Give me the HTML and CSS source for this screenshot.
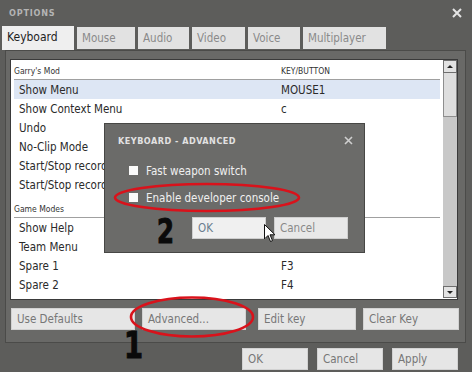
FILE: index.html
```html
<!DOCTYPE html>
<html lang="en">
<head>
  <meta charset="UTF-8">
  <title>Options</title>
  <link rel="stylesheet" href="styles.css">
</head>
<body>
  <div class="titlebar">
    <span class="title">OPTIONS</span>
    <svg class="close" width="10" height="10" viewBox="0 0 10 10"><path d="M1 1 L9 9 M9 1 L1 9" stroke="#e4e4e4" stroke-width="2"/></svg>
  </div>

  <div class="tabs">
    <div class="tab active w-keyboard">Keyboard</div>
    <div class="tab w-mouse">Mouse</div>
    <div class="tab w-audio">Audio</div>
    <div class="tab w-video">Video</div>
    <div class="tab w-voice">Voice</div>
    <div class="tab w-multi">Multiplayer</div>
  </div>

  <div class="panel">
    <div class="list">
      <div class="rows">
        <div class="group first"><span class="name">Garry's Mod</span><span class="key">KEY/BUTTON</span></div>
        <div class="row selected"><span class="name">Show Menu</span><span class="key">MOUSE1</span></div>
        <div class="row"><span class="name">Show Context Menu</span><span class="key">c</span></div>
        <div class="row"><span class="name">Undo</span><span class="key"></span></div>
        <div class="row"><span class="name">No-Clip Mode</span><span class="key"></span></div>
        <div class="row"><span class="name">Start/Stop recording</span><span class="key"></span></div>
        <div class="row"><span class="name">Start/Stop recording</span><span class="key"></span></div>
        <div class="group"><span class="name">Game Modes</span><span class="key"></span></div>
        <div class="row"><span class="name">Show Help</span><span class="key"></span></div>
        <div class="row"><span class="name">Team Menu</span><span class="key"></span></div>
        <div class="row"><span class="name">Spare 1</span><span class="key">F3</span></div>
        <div class="row"><span class="name">Spare 2</span><span class="key">F4</span></div>
      </div>
      <div class="scrollbar">
        <div class="sb-btn"><span class="arrow up"></span></div>
        <div class="sb-thumb"></div>
        <div class="sb-track"></div>
        <div class="sb-btn down"><span class="arrow dn"></span></div>
      </div>
    </div>
    <div class="actions">
      <button class="btn w-defaults">Use Defaults</button>
      <button class="btn w-advanced">Advanced...</button>
      <button class="btn w-edit">Edit key</button>
      <button class="btn w-clear">Clear Key</button>
    </div>
  </div>

  <div class="footer">
    <button class="btn w-small">OK</button>
    <button class="btn w-small">Cancel</button>
    <button class="btn w-small">Apply</button>
  </div>

  <!-- advanced dialog over the list -->
  <div class="dialog">
    <div class="dlg-title">
      <span>KEYBOARD - ADVANCED</span>
      <svg width="9" height="9" viewBox="0 0 9 9"><path d="M1 1 L8 8 M8 1 L1 8" stroke="#cfcfcf" stroke-width="1.6"/></svg>
    </div>
    <label class="check"><span class="box"></span>Fast weapon switch</label>
    <label class="check"><span class="box"></span>Enable developer console</label>
    <div class="dlg-actions">
      <button class="btn dlg-btn ok">OK</button>
      <button class="btn dlg-btn">Cancel</button>
    </div>
  </div>

  <svg class="marks" width="472" height="372" viewBox="0 0 472 372">
    <ellipse cx="207" cy="197.5" rx="92" ry="13.5" fill="none" stroke="#d9121b" stroke-width="2.6"/>
    <ellipse cx="192" cy="317" rx="61" ry="19.5" fill="none" stroke="#d9121b" stroke-width="2.6"/>
  </svg>

  <span class="num num-2">2</span>
  <span class="num num-1">1</span>

  <svg class="cursor" width="12" height="19" viewBox="0 0 12 19">
    <path d="M0.5 0.5 L0.5 15 L4 11.5 L6.5 17.5 L8.5 16.6 L6 10.8 L11 10.8 Z" fill="#fff" stroke="#111" stroke-width="1"/>
  </svg>
</body>
</html>
```

FILE: styles.css
```css
* {
  box-sizing: border-box;
}
body {
  margin: 0;
  width: 472px;
  height: 372px;
  overflow: hidden;
  position: relative;
  background: #5d5d5b;
  font-family: "DejaVu Sans Condensed", "DejaVu Sans", sans-serif;
  font-size: 11.5px;
  color: #2a2a2a;
}
.titlebar {
  height: 26px;
  display: flex;
  align-items: center;
  justify-content: space-between;
  padding: 0 10px 0 9px;
}
.title {
  font-size: 9px;
  font-weight: bold;
  color: #b4b4b4;
  letter-spacing: 0.8px;
}
.tabs {
  display: flex;
  gap: 3px;
  padding-left: 2px;
  height: 24px;
}
.tab {
  height: 22px;
  margin-top: 1px;
  padding: 4px 0 0 5px;
  background: #e2e2e2;
  color: #8a8a8a;
  font-size: 11.5px;
}
.tab.active {
  height: 24px;
  margin-top: 0;
  background: #efefef;
  color: #1e1e1e;
  font-size: 12px;
}
.w-keyboard { width: 72px; }
.w-mouse { width: 58px; }
.w-audio { width: 51px; }
.w-video { width: 53px; }
.w-voice { width: 52px; }
.w-multi { width: 83px; }

.panel {
  margin: 0 6px 0 5px;
  height: 293px;
  border: 1px solid #4b4b49;
  background: #696967;
  padding: 8px 0 0 4px;
}
.list {
  width: 448px;
  height: 241px;
  border: 1px solid #3a3a3a;
  background: #fff;
  display: flex;
  padding-left: 3px;
}
.rows {
  width: 426px;
}
.row, .group {
  display: flex;
  height: 19px;
  align-items: center;
}
.row .name {
  width: 267px;
  padding-left: 5px;
  white-space: nowrap;
  overflow: hidden;
}
.row.selected {
  background: #dde6f4;
}
.group {
  height: 24px;
  align-items: flex-end;
  padding-bottom: 3px;
  border-bottom: 1px solid #a0a0a0;
  font-size: 8.5px;
  color: #333;
}
.group.first {
  height: 20px;
}
.group .name {
  width: 267px;
}
.scrollbar {
  width: 14px;
  height: 238px;
  margin-left: 3px;
  display: flex;
  flex-direction: column;
  background: #c8c8c8;
}
.sb-btn {
  height: 13px;
  background: #e2e2e2;
  border: 1px solid #6e6e6e;
  display: flex;
  align-items: center;
  justify-content: center;
}
.sb-btn.down {
  height: 12px;
}
.sb-thumb {
  height: 44px;
  background: #dedede;
  border: 1px solid #8e8e8e;
  border-top: none;
}
.sb-track {
  flex: 1;
}
.arrow {
  width: 0;
  height: 0;
  border-left: 3px solid transparent;
  border-right: 3px solid transparent;
}
.arrow.up { border-bottom: 3px solid #222; }
.arrow.dn { border-top: 3px solid #222; }

.btn {
  height: 22px;
  background: #e6e6e6;
  border: 1px solid #d2d2d2;
  color: #777;
  font-family: inherit;
  font-size: 11.5px;
  text-align: left;
  padding: 0 0 0 5px;
}
.actions {
  display: flex;
  margin-top: 8px;
  padding-left: 1px;
}
.w-defaults { width: 124px; }
.w-advanced { width: 104px; margin-left: 7px; }
.w-edit { width: 98px; margin-left: 12px; }
.w-clear { width: 96px; margin-left: 7px; }
.footer {
  display: flex;
  justify-content: flex-end;
  gap: 9px;
  padding: 5px 14px 0 0;
}
.w-small { width: 66px; }

.dialog {
  position: absolute;
  left: 104px;
  top: 123px;
  width: 261px;
  height: 130px;
  background: #6b6b69;
  border: 1px solid #474745;
  padding: 0 0 0 13px;
}
.dlg-title {
  height: 33px;
  display: flex;
  align-items: center;
  justify-content: space-between;
  padding: 0 11px 0 0;
  font-size: 9px;
  font-weight: bold;
  letter-spacing: 0.5px;
  color: #e2e2e2;
}
.check {
  height: 27px;
  display: flex;
  align-items: center;
  gap: 8px;
  padding-left: 11px;
  color: #f0f0f0;
  font-size: 11.5px;
}
.box {
  width: 9px;
  height: 9px;
  background: #fafafa;
}
.dlg-actions {
  display: flex;
  gap: 8px;
  margin-top: 6px;
  padding-left: 74px;
}
.dlg-btn {
  width: 74px;
  background: #e8e8e8;
  border: 1px solid #cfcfcf;
  color: #888;
}
.dlg-btn.ok {
  background: #f0f0f0;
  color: #6a7e8e;
}

.marks {
  position: absolute;
  left: 0;
  top: 0;
}
.num {
  position: absolute;
  font-family: "DejaVu Sans Condensed", "DejaVu Sans", sans-serif;
  font-weight: bold;
  color: #0a0a0a;
  line-height: 1;
  -webkit-text-stroke: 1px #0a0a0a;
  transform: scaleX(0.82);
  transform-origin: left top;
}
.num-2 {
  left: 157px;
  top: 215px;
  font-size: 33px;
}
.num-1 {
  left: 124px;
  top: 327px;
  font-size: 37px;
}
.cursor {
  position: absolute;
  left: 264px;
  top: 224px;
}
```
